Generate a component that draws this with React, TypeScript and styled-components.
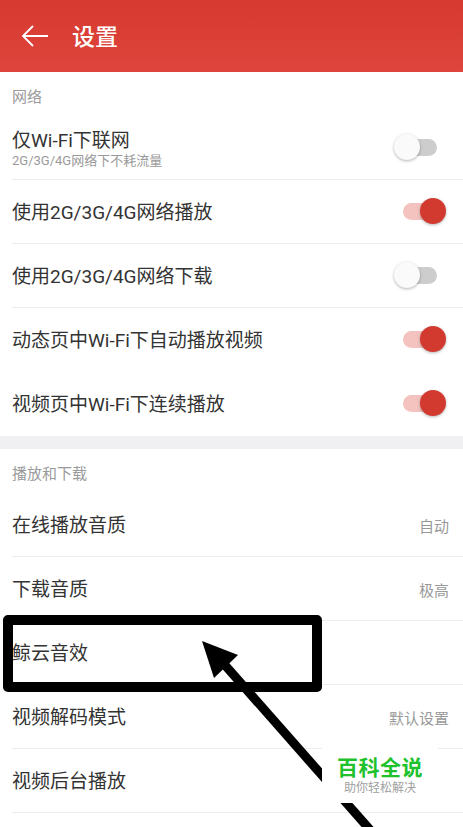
import React from "react";
import styled, { createGlobalStyle } from "styled-components";

const Global = createGlobalStyle`
  html, body { margin: 0; padding: 0; background: #fff; }
  body { font-family: Roboto, "Noto Sans CJK SC", "Noto Sans", sans-serif; }
  * { box-sizing: border-box; }
`;

const Page = styled.div`
  position: relative;
  width: 463px;
  height: 827px;
  overflow: hidden;
  background: #fff;
`;

const Header = styled.header`
  height: 72px;
  display: flex;
  align-items: center;
  padding-left: 21px;
  gap: 23px;
  background: linear-gradient(180deg, #d5392f 0%, #e0453d 100%);
  color: #fff;
`;

const Title = styled.h1`
  margin: 0;
  font-size: 23px;
  font-weight: 500;
  line-height: 1;
  padding-top: 2px;
  color: #fff;
`;

const SectionLabel = styled.div<{ $h: number }>`
  height: ${(p) => p.$h}px;
  display: flex;
  align-items: center;
  padding: 3px 0 0 12px;
  font-size: 15px;
  color: #9a9a9a;
`;

const Gap = styled.div`
  height: 13px;
  background: #f0f0f2;
`;

const Row = styled.div<{ $divider: boolean }>`
  height: 64px;
  display: flex;
  align-items: center;
  justify-content: space-between;
  padding: 0 14px 0 12px;
  position: relative;
  &::after {
    content: "";
    display: ${(p) => (p.$divider ? "block" : "none")};
    position: absolute;
    left: 12px;
    right: 0;
    bottom: 0;
    height: 1px;
    background: #ededed;
  }
`;

const TextBlock = styled.div`
  display: flex;
  flex-direction: column;
`;

const RowTitle = styled.div`
  font-size: 19px;
  line-height: 25px;
  color: #333;
`;

const RowSub = styled.div`
  font-size: 13px;
  line-height: 16px;
  color: #9a9a9a;
`;

const Value = styled.div`
  font-size: 15px;
  color: #999;
`;

const Switch = styled.div`
  position: relative;
  width: 52px;
  height: 28px;
  margin-right: 3px;
`;

const Track = styled.div<{ $on: boolean }>`
  position: absolute;
  left: 9px;
  top: 5px;
  width: 34px;
  height: 17px;
  border-radius: 9px;
  background: ${(p) => (p.$on ? "#f4c3c0" : "#cdcdcd")};
`;

const Knob = styled.div<{ $on: boolean }>`
  position: absolute;
  top: 0;
  ${(p) => (p.$on ? "right: 0;" : "left: 0;")}
  width: 26px;
  height: 26px;
  border-radius: 50%;
  background: ${(p) => (p.$on ? "#d2392f" : "#fafafa")};
  box-shadow: 0 1px 3px rgba(0, 0, 0, 0.3);
`;

const Frame = styled.div`
  position: absolute;
  left: 3px;
  top: 615px;
  width: 319px;
  height: 77px;
  border: 10px solid #000;
  border-radius: 5px;
  z-index: 2;
`;

const Overlay = styled.svg`
  position: absolute;
  left: 0;
  top: 0;
  z-index: 3;
  pointer-events: none;
`;

const Watermark = styled.div`
  position: absolute;
  left: 322px;
  top: 748px;
  width: 116px;
  height: 55px;
  background: #fff;
  z-index: 4;
  display: flex;
  flex-direction: column;
  align-items: center;
  justify-content: center;
  gap: 1px;
`;

const WmTitle = styled.div`
  font-size: 21px;
  line-height: 24px;
  font-weight: 700;
  color: #1fc22c;
  letter-spacing: 0.5px;
`;

const WmSub = styled.div`
  font-size: 12px;
  line-height: 14px;
  color: #a0a0a0;
`;

type Item = {
  title: string;
  sub?: string;
  toggle?: boolean;
  value?: string;
  divider?: boolean;
};

const network: Item[] = [
  { title: "仅Wi-Fi下联网", sub: "2G/3G/4G网络下不耗流量", toggle: false, divider: true },
  { title: "使用2G/3G/4G网络播放", toggle: true, divider: true },
  { title: "使用2G/3G/4G网络下载", toggle: false, divider: true },
  { title: "动态页中Wi-Fi下自动播放视频", toggle: true, divider: false },
  { title: "视频页中Wi-Fi下连续播放", toggle: true, divider: false },
];

const play: Item[] = [
  { title: "在线播放音质", value: "自动", divider: true },
  { title: "下载音质", value: "极高", divider: true },
  { title: "鲸云音效", divider: true },
  { title: "视频解码模式", value: "默认设置", divider: true },
  { title: "视频后台播放", divider: true },
  { title: "", divider: false },
];

function SettingRow({ item }: { item: Item }) {
  return (
    <Row $divider={!!item.divider}>
      <TextBlock>
        <RowTitle>{item.title}</RowTitle>
        {item.sub && <RowSub>{item.sub}</RowSub>}
      </TextBlock>
      {item.toggle !== undefined && (
        <Switch>
          <Track $on={item.toggle} />
          <Knob $on={item.toggle} />
        </Switch>
      )}
      {item.value && <Value>{item.value}</Value>}
    </Row>
  );
}

export default function App() {
  return (
    <Page>
      <Global />
      <Header>
        <svg width="28" height="24" viewBox="0 0 28 24" fill="none">
          <path d="M27 12H2M12 2L2 12l10 10" stroke="#fff" strokeWidth="1.8" strokeLinejoin="miter" />
        </svg>
        <Title>设置</Title>
      </Header>
      <SectionLabel $h={44}>网络</SectionLabel>
      {network.map((it) => (
        <SettingRow key={it.title} item={it} />
      ))}
      <Gap />
      <SectionLabel $h={44}>播放和下载</SectionLabel>
      {play.map((it, i) => (
        <SettingRow key={i} item={it} />
      ))}
      <Frame />
      <Overlay width="463" height="827" viewBox="0 0 463 827">
        <line x1="224" y1="664" x2="372" y2="832" stroke="#000" strokeWidth="9" />
        <polygon points="202,641 214,678 238,655" fill="#000" />
      </Overlay>
      <Watermark>
        <WmTitle>百科全说</WmTitle>
        <WmSub>助你轻松解决</WmSub>
      </Watermark>
    </Page>
  );
}
